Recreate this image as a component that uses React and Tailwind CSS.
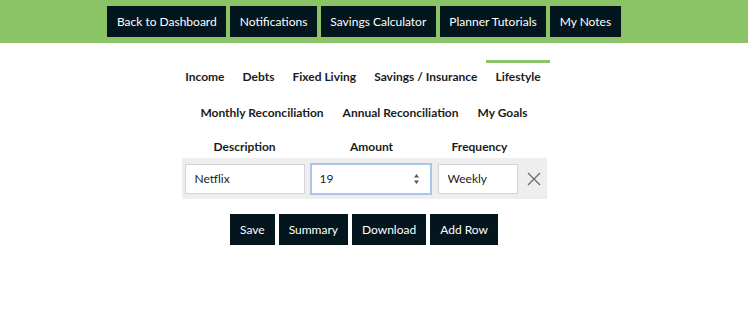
import React, { useState } from 'react';

const navLinks = ['Back to Dashboard', 'Notifications', 'Savings Calculator', 'Planner Tutorials', 'My Notes'];
const tabsTop = ['Income', 'Debts', 'Fixed Living', 'Savings / Insurance', 'Lifestyle'];
const tabsBottom = ['Monthly Reconciliation', 'Annual Reconciliation', 'My Goals'];

const Tab = ({ label, active }) => (
  <button
    className={`px-[9px] pt-[6px] pb-[6px] text-[12px] leading-[15px] font-bold text-[#1c1c1c] border-t-[3px] ${
      active ? 'border-[#8bc367]' : 'border-transparent'
    }`}
  >
    {label}
  </button>
);

export default function App() {
  const [rows] = useState([{ description: 'Netflix', amount: '19', frequency: 'Weekly' }]);

  return (
    <div className="min-h-[328px] bg-white font-['Lato','Liberation_Sans',sans-serif]">
      {/* Top nav */}
      <div className="bg-[#8bc367] h-[43px] pr-5 flex justify-center items-start pt-[6px] gap-[4px]">
        {navLinks.map((l) => (
          <button key={l} className="h-[31px] px-[9.5px] bg-[#03161d] text-white text-[12px]">
            {l}
          </button>
        ))}
      </div>

      <div className="pr-5 flex flex-col items-center">
        {/* Tabs */}
        <div className="flex justify-center mt-[17px] mr-[2px]">
          {tabsTop.map((t) => (
            <Tab key={t} label={t} active={t === 'Lifestyle'} />
          ))}
        </div>
        <div className="flex justify-center mt-[6px] gap-[1px]">
          {tabsBottom.map((t) => (
            <Tab key={t} label={t} />
          ))}
        </div>

        {/* Table */}
        <div className="mt-[13px] flex flex-col">
          <div className="flex text-[12px] leading-[15px] font-bold text-[#1c1c1c] pl-[3px]">
            <div className="w-[120px] text-center">Description</div>
            <div className="w-[122px] ml-[6px] text-center">Amount</div>
            <div className="w-[80px] ml-[7px] text-center">Frequency</div>
          </div>
          {rows.map((r, i) => (
            <div key={i} className="mt-[4px] bg-[#eeeeee] w-[365px] h-[41px] flex items-center pl-[3px]">
              <input
                readOnly
                value={r.description}
                className="w-[120px] h-[30px] bg-white border border-[#d4d4d4] px-[9px] text-[12px] text-[#222] outline-none"
              />
              <div className="ml-[5px] w-[122px] h-[32px] border-2 border-[#a9c6ea] bg-white flex items-center pr-[10px]">
                <span className="flex-1 pl-[8px] text-[12px] text-[#222]">{r.amount}</span>
                <svg width="7" height="12" viewBox="0 0 7 12">
                  <path d="M3.5 1 L6 4.5 H1 Z" fill="#555" />
                  <path d="M3.5 11 L6 7.5 H1 Z" fill="#555" />
                </svg>
              </div>
              <input
                readOnly
                value={r.frequency}
                className="ml-[6px] w-[80px] h-[30px] bg-white border border-[#d4d4d4] px-[9px] text-[12px] text-[#222] outline-none"
              />
              <button className="ml-[9px]">
                <svg width="14" height="14" viewBox="0 0 14 14">
                  <path d="M1 1 L13 13 M13 1 L1 13" stroke="#6b6b6b" strokeWidth="1.3" />
                </svg>
              </button>
            </div>
          ))}
        </div>

        {/* Actions */}
        <div className="flex gap-[4px] mt-[15px]">
          {['Save', 'Summary', 'Download', 'Add Row'].map((b) => (
            <button key={b} className="h-[31px] px-[10px] bg-[#03161d] text-white text-[12px]">
              {b}
            </button>
          ))}
        </div>
      </div>
    </div>
  );
}
